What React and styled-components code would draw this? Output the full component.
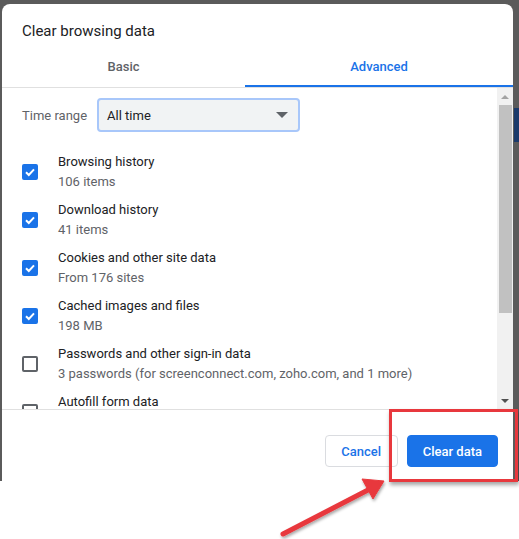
import styled, { createGlobalStyle } from 'styled-components';

const GlobalStyle = createGlobalStyle`
  html, body {
    margin: 0;
    padding: 0;
    background: #ffffff;
  }
  body {
    font-family: Roboto, "Liberation Sans", Arial, sans-serif;
    -webkit-font-smoothing: antialiased;
  }
`;

const Page = styled.div`
  position: relative;
  width: 519px;
  height: 539px;
  overflow: hidden;
  background: #ffffff;
`;

const Backdrop = styled.div`
  height: 481px;
  box-sizing: border-box;
  padding: 4px 6px 0 2px;
  background: #5b5b5b;
  display: flex;
  position: relative;
`;

const EdgeStripe = styled.div`
  position: absolute;
  right: 0;
  top: 108px;
  width: 5px;
  height: 34px;
  background: #1b3a6b;
`;

const Dialog = styled.div`
  width: 511px;
  height: 477px;
  background: #ffffff;
  border-radius: 8px 8px 0 0;
  display: flex;
  flex-direction: column;
  overflow: hidden;
`;

const Title = styled.h1`
  margin: 0;
  padding: 17px 20px 0;
  font-size: 15px;
  line-height: 20px;
  font-weight: 400;
  color: #202124;
`;

const Tabs = styled.div`
  display: flex;
  border-bottom: 1px solid #e0e0e0;
`;

const Tab = styled.div`
  box-sizing: border-box;
  height: 46px;
  padding-top: 16px;
  line-height: 20px;
  font-size: 13px;
  font-weight: 500;
  text-align: center;
  ${({ $width }) => ($width ? `width: ${$width}px;` : 'flex: 1;')}
  color: ${({ $active }) => ($active ? '#1a73e8' : '#5f6368')};
  border-bottom: 2px solid ${({ $active }) => ($active ? '#1a73e8' : 'transparent')};
`;

const Body = styled.div`
  height: 321px;
  display: flex;
`;

const List = styled.div`
  flex: 1;
  overflow: hidden;
  padding: 10px 0 0 20px;
`;

const RangeRow = styled.div`
  display: flex;
  align-items: center;
  gap: 10px;
  margin-bottom: 16px;
`;

const RangeLabel = styled.span`
  font-size: 13px;
  color: #5f6368;
`;

const Select = styled.div`
  box-sizing: border-box;
  width: 203px;
  height: 34px;
  padding: 0 8px;
  background: #f1f3f4;
  border: 2px solid #a8c7fa;
  border-radius: 4px;
  display: flex;
  align-items: center;
  justify-content: space-between;
  font-size: 13px;
  color: #202124;
`;

const Caret = styled.span`
  width: 0;
  height: 0;
  margin-right: 2px;
  border-left: 6px solid transparent;
  border-right: 6px solid transparent;
  border-top: 6px solid #5f6368;
`;

const Row = styled.div`
  height: 48px;
  display: flex;
  align-items: center;
  gap: 20px;
`;

const Box = styled.span`
  box-sizing: border-box;
  flex: 0 0 16px;
  width: 16px;
  height: 16px;
  border-radius: 2px;
  display: flex;
  align-items: center;
  justify-content: center;
  background: ${({ $checked }) => ($checked ? '#1a73e8' : '#ffffff')};
  border: ${({ $checked }) => ($checked ? 'none' : '2px solid #5f6368')};
`;

const Texts = styled.div`
  display: flex;
  flex-direction: column;
  min-height: 40px;
  margin-top: -1px;
`;

const Label = styled.span`
  font-size: 13px;
  line-height: 20px;
  color: #202124;
  white-space: nowrap;
`;

const Sub = styled.span`
  font-size: 13px;
  line-height: 20px;
  color: #5f6368;
  white-space: nowrap;
`;

const Scrollbar = styled.div`
  width: 16px;
  background: #f1f1f1;
  display: flex;
  flex-direction: column;
  align-items: center;
`;

const ScrollArrow = styled.div`
  height: 17px;
  display: flex;
  align-items: center;
  justify-content: center;
  &::before {
    content: '';
    border-left: 4px solid transparent;
    border-right: 4px solid transparent;
    ${({ $down }) =>
      $down ? 'border-top: 4px solid #505050;' : 'border-bottom: 4px solid #a3a3a3;'}
  }
`;

const Thumb = styled.div`
  width: 13px;
  height: 208px;
  background: #c1c1c1;
`;

const Spacer = styled.div`
  flex: 1;
`;

const Footer = styled.div`
  flex: 1;
  border-top: 1px solid #e0e0e0;
  display: flex;
  justify-content: flex-end;
  align-items: flex-start;
  gap: 9px;
  padding: 25px 15px 0 0;
`;

const Button = styled.button`
  box-sizing: border-box;
  height: 32px;
  padding: 0 15px;
  border-radius: 4px;
  font-family: inherit;
  font-size: 13px;
  font-weight: 500;
  cursor: pointer;
  min-width: ${({ $min }) => $min}px;
  background: ${({ $primary }) => ($primary ? '#1a73e8' : '#ffffff')};
  color: ${({ $primary }) => ($primary ? '#ffffff' : '#1a73e8')};
  border: 1px solid ${({ $primary }) => ($primary ? '#1a73e8' : '#dadce0')};
`;

const Highlight = styled.div`
  position: absolute;
  left: 389px;
  top: 409px;
  width: 129px;
  height: 73px;
  box-sizing: border-box;
  border: 3px solid #e8383d;
  box-shadow: 1px 3px 4px rgba(0, 0, 0, 0.35);
`;

const ArrowLayer = styled.svg`
  position: absolute;
  left: 0;
  top: 0;
  pointer-events: none;
`;

const Check = () => (
  <svg width="12" height="12" viewBox="0 0 12 12">
    <path d="M2 6.2 L4.8 9 L10 3.4" fill="none" stroke="#fff" strokeWidth="2" />
  </svg>
);

const ITEMS = [
  ['Browsing history', '106 items', true],
  ['Download history', '41 items', true],
  ['Cookies and other site data', 'From 176 sites', true],
  ['Cached images and files', '198 MB', true],
  ['Passwords and other sign-in data', '3 passwords (for screenconnect.com, zoho.com, and 1 more)', false],
  ['Autofill form data', '', false],
];

const App = () => (
  <Page>
    <GlobalStyle />
    <Backdrop>
      <EdgeStripe />
      <Dialog>
        <Title>Clear browsing data</Title>
        <Tabs>
          <Tab $width={243}>Basic</Tab>
          <Tab $active>Advanced</Tab>
        </Tabs>
        <Body>
          <List>
            <RangeRow>
              <RangeLabel>Time range</RangeLabel>
              <Select>
                All time
                <Caret />
              </Select>
            </RangeRow>
            {ITEMS.map(([label, sub, checked]) => (
              <Row key={label}>
                <Box $checked={checked}>{checked && <Check />}</Box>
                <Texts>
                  <Label>{label}</Label>
                  {sub && <Sub>{sub}</Sub>}
                </Texts>
              </Row>
            ))}
          </List>
          <Scrollbar>
            <ScrollArrow />
            <Thumb />
            <Spacer />
            <ScrollArrow $down />
          </Scrollbar>
        </Body>
        <Footer>
          <Button $min={73}>Cancel</Button>
          <Button $primary $min={91}>Clear data</Button>
        </Footer>
      </Dialog>
    </Backdrop>
    <Highlight />
    <ArrowLayer width="519" height="539" viewBox="0 0 519 539">
      <defs>
        <filter id="sh" x="-20%" y="-20%" width="140%" height="140%">
          <feDropShadow dx="1" dy="2" stdDeviation="1.5" floodColor="#000" floodOpacity="0.35" />
        </filter>
      </defs>
      <g filter="url(#sh)" fill="#e8393e" stroke="#e8393e">
        <line x1="283" y1="534" x2="368" y2="490" strokeWidth="5" strokeLinecap="round" />
        <polygon points="384,481 362,479 373,499" strokeWidth="1" strokeLinejoin="round" />
      </g>
    </ArrowLayer>
  </Page>
);

export default App;
